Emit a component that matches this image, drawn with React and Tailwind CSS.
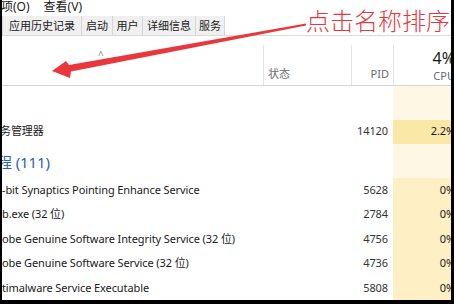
import React from "react";

const font = "font-['Noto_Sans','Noto_Sans_CJK_SC',sans-serif]";

const tabs = [
  { label: "应用历史记录", w: "w-[79px]" },
  { label: "启动", w: "w-[31px]" },
  { label: "用户", w: "w-[30px]" },
  { label: "详细信息", w: "w-[53px]" },
  { label: "服务", w: "w-[29px]" },
];

const rows = [
  { name: "-bit Synaptics Pointing Enhance Service", pid: "5628" },
  { name: "b.exe (32 位)", pid: "2784" },
  { name: "obe Genuine Software Integrity Service (32 位)", pid: "4756" },
  { name: "obe Genuine Software Service (32 位)", pid: "4736" },
  { name: "timalware Service Executable", pid: "5808" },
];

const Arrow = () => (
  <svg className="absolute left-0 top-0 pointer-events-none" width="454" height="304" viewBox="0 0 454 304">
    <polygon
      points="52,71 66,61 69,65 306,23.5 306,25.5 71,71.5 70,78"
      fill="#e8383d"
    />
  </svg>
);

const App = () => {
  return (
    <div className={`w-[454px] h-[304px] bg-black pl-[2px] pr-[3px] pb-[4px] ${font}`}>
      <div className="relative w-full h-full bg-white overflow-hidden flex flex-col text-[11px] text-[#1a1a1a]">
        {/* menu */}
        <div className="h-[16px] flex items-start gap-[14px] text-[12px] leading-[14px]">
          <span className="-ml-[1px]">项(O)</span>
          <span>查看(V)</span>
        </div>

        {/* tabs */}
        <div className="h-[21px] flex border-b border-[#d9d9d9]">
          <div className="flex bg-[#f0f0f0] h-full">
            <div className="w-[1px] border-r border-[#d6d6d6]" />
            {tabs.map((t) => (
              <div key={t.label} className={`${t.w} flex items-center justify-center pt-[2px] border-r border-[#d6d6d6]`}>
                {t.label}
              </div>
            ))}
          </div>
        </div>

        {/* header */}
        <div className="h-[50px] grid grid-cols-[261px_88px_42px_64px] border-b border-[#d4d4d4] pt-[9px]">
          <div className="relative">
            <span className="absolute left-[96px] top-[3px] text-[#8a8a8a] text-[10px]">^</span>
          </div>
          <div className="border-l border-[#e3e3e3] flex items-end pb-[2px] pl-[4px] text-[#6b6b6b]">状态</div>
          <div className="border-l border-[#e3e3e3] flex items-end justify-end pb-[2px] pr-[4px] text-[#6b6b6b]">PID</div>
          <div className="border-l border-[#e3e3e3] flex flex-col items-end justify-end pb-[2px] pr-[2px]">
            <span className="text-[16px] leading-[18px] text-[#1a1a1a]">4%</span>
            <span className="text-[#5a6b85] leading-[14px] mt-[2px]">CPU</span>
          </div>
        </div>

        {/* body */}
        <div className="grid grid-cols-[261px_88px_42px_64px] tracking-[-0.1px]">
          <div className="h-[34px] col-span-3" />
          <div className="h-[34px] bg-[#fef7e4]" />

          <div className="h-[24px] flex items-center -ml-[2px]">务管理器</div>
          <div className="h-[24px]" />
          <div className="h-[24px] flex items-center justify-end pr-[5px] text-[#333]">14120</div>
          <div className="h-[24px] flex items-center justify-end pr-[2px] bg-[#f9e8a8]">2.2%</div>

          <div className="h-[34px] flex items-center pt-[3px] -ml-[5px] text-[15px] text-[#2a62b8]">程 (111)</div>
          <div className="h-[34px]" />
          <div className="h-[34px]" />
          <div className="h-[34px] bg-[#fef7e4]" />

          {rows.map((r) => (
            <React.Fragment key={r.pid}>
              <div className="h-[24.5px] flex items-center whitespace-nowrap">{r.name}</div>
              <div className="h-[24.5px]" />
              <div className="h-[24.5px] flex items-center justify-end pr-[5px] text-[#333]">{r.pid}</div>
              <div className="h-[24.5px] flex items-center justify-end pr-[2px] bg-[#ffefc4]">0%</div>
            </React.Fragment>
          ))}
        </div>

        <div className="absolute left-[304px] top-[5px] text-[24px] leading-[30px] text-[#e8383d] font-['Noto_Sans_CJK_SC',sans-serif] font-light whitespace-nowrap">
          点击名称排序
        </div>
      </div>
      <Arrow />
    </div>
  );
};

export default App;
